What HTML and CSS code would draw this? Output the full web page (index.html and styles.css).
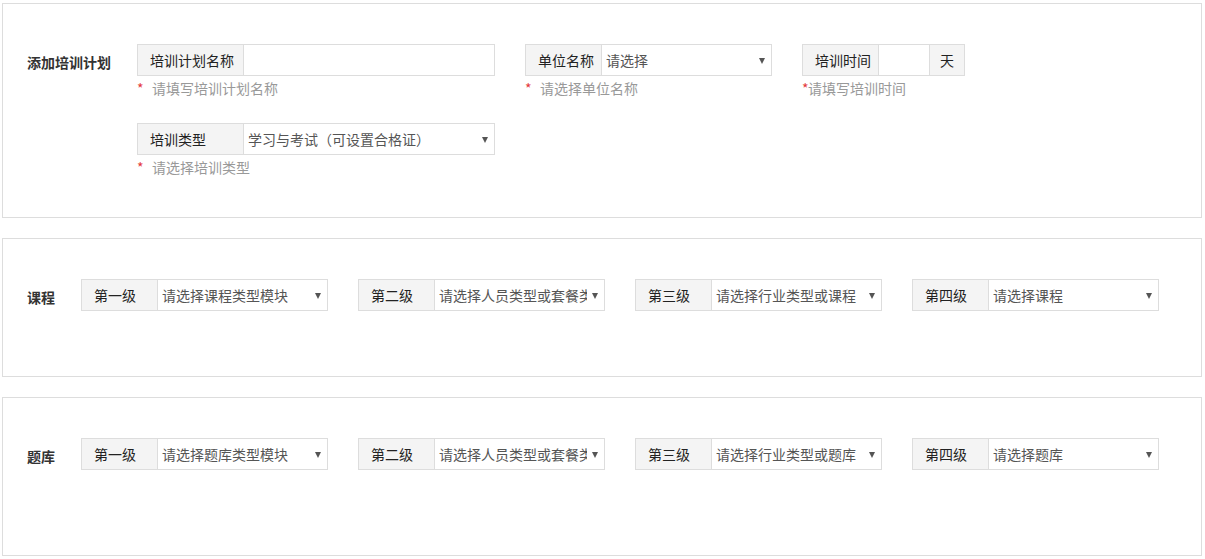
FILE: index.html
```html
<!DOCTYPE html>
<html lang="zh-CN">
<head>
<meta charset="UTF-8">
<meta name="viewport" content="width=device-width, initial-scale=1.0">
<title>添加培训计划</title>
<link rel="stylesheet" href="styles.css">
</head>
<body>

<div class="panel panel-plan">
    <div class="panel-label label-wide">添加培训计划</div>
    <div class="panel-body">
        <div class="form-row">
            <div class="field">
                <div class="input-group group-wide">
                    <span class="addon addon-wide">培训计划名称</span>
                    <input type="text" class="text-input" name="planName">
                </div>
                <div class="hint"><span class="star">*</span>请填写培训计划名称</div>
            </div>
            <div class="field">
                <div class="input-group">
                    <span class="addon">单位名称</span>
                    <div class="select-box"><span class="select-text">请选择</span><span class="caret"></span></div>
                </div>
                <div class="hint"><span class="star">*</span>请选择单位名称</div>
            </div>
            <div class="field">
                <div class="input-group group-days">
                    <span class="addon">培训时间</span>
                    <input type="text" class="text-input" name="days">
                    <span class="addon addon-end">天</span>
                </div>
                <div class="hint"><span class="star star-tight">*</span>请填写培训时间</div>
            </div>
        </div>
        <div class="form-row row-second">
            <div class="field">
                <div class="input-group group-wide">
                    <span class="addon addon-wide">培训类型</span>
                    <div class="select-box"><span class="select-text">学习与考试（可设置合格证）</span><span class="caret"></span></div>
                </div>
                <div class="hint"><span class="star">*</span>请选择培训类型</div>
            </div>
        </div>
    </div>
</div>

<div class="panel panel-course">
    <div class="panel-label">课程</div>
    <div class="panel-body">
        <div class="form-row">
            <div class="input-group">
                <span class="addon">第一级</span>
                <div class="select-box"><span class="select-text">请选择课程类型模块</span><span class="caret"></span></div>
            </div>
            <div class="input-group">
                <span class="addon">第二级</span>
                <div class="select-box"><span class="select-text">请选择人员类型或套餐类型</span><span class="caret"></span></div>
            </div>
            <div class="input-group">
                <span class="addon">第三级</span>
                <div class="select-box"><span class="select-text">请选择行业类型或课程</span><span class="caret"></span></div>
            </div>
            <div class="input-group">
                <span class="addon">第四级</span>
                <div class="select-box"><span class="select-text">请选择课程</span><span class="caret"></span></div>
            </div>
        </div>
    </div>
</div>

<div class="panel panel-bank">
    <div class="panel-label">题库</div>
    <div class="panel-body">
        <div class="form-row">
            <div class="input-group">
                <span class="addon">第一级</span>
                <div class="select-box"><span class="select-text">请选择题库类型模块</span><span class="caret"></span></div>
            </div>
            <div class="input-group">
                <span class="addon">第二级</span>
                <div class="select-box"><span class="select-text">请选择人员类型或套餐类型</span><span class="caret"></span></div>
            </div>
            <div class="input-group">
                <span class="addon">第三级</span>
                <div class="select-box"><span class="select-text">请选择行业类型或题库</span><span class="caret"></span></div>
            </div>
            <div class="input-group">
                <span class="addon">第四级</span>
                <div class="select-box"><span class="select-text">请选择题库</span><span class="caret"></span></div>
            </div>
        </div>
    </div>
</div>

</body>
</html>
```

FILE: styles.css
```css
* {
    box-sizing: border-box;
}
body {
    font-family: "Noto Sans CJK SC", "Liberation Sans", sans-serif;
    font-size: 14px;
    color: #333;
    background-color: #fff;
    margin: 0;
    padding: 3px 0 0 2px;
}
.panel {
    display: flex;
    align-items: flex-start;
    width: 1200px;
    border: 1px solid #ddd;
    padding: 40px 0 65px 24px;
    margin-bottom: 20px;
}
.panel-plan {
    padding-bottom: 40px;
}
.panel-bank {
    padding-bottom: 85px;
}
.panel-label {
    width: 54px;
    height: 32px;
    flex-shrink: 0;
    font-weight: bold;
    line-height: 32px;
    padding-top: 2px;
}
.label-wide {
    width: 110px;
}
.form-row {
    display: flex;
    gap: 30px;
}
.row-second {
    margin-top: 25px;
}
.input-group {
    display: flex;
    width: 247px;
    height: 32px;
    border: 1px solid #ddd;
    background-color: #fff;
}
.group-wide {
    width: 358px;
}
.group-days {
    width: 163px;
}
.addon {
    flex-shrink: 0;
    width: 76px;
    padding-left: 12px;
    line-height: 30px;
    background-color: #f4f4f4;
    border-right: 1px solid #ddd;
    color: #222;
    white-space: nowrap;
}
.addon-wide {
    width: 106px;
}
.addon-end {
    width: 35px;
    padding-left: 10px;
    border-right: none;
    border-left: 1px solid #ddd;
}
.text-input {
    flex: 1;
    min-width: 0;
    border: none;
    outline: none;
    padding: 0 4px;
    font: inherit;
}
.select-box {
    position: relative;
    flex: 1;
    min-width: 0;
    padding: 0 17px 0 4px;
    line-height: 30px;
    color: #555;
}
.select-text {
    display: block;
    white-space: nowrap;
    overflow: hidden;
}
.caret {
    position: absolute;
    right: 6px;
    top: 13px;
    width: 0;
    height: 0;
    border-left: 3px solid transparent;
    border-right: 3px solid transparent;
    border-top: 6px solid #555;
}
.hint {
    margin-top: 2px;
    height: 20px;
    line-height: 20px;
    color: #999;
}
.star {
    display: inline-block;
    vertical-align: top;
    width: 15px;
    color: #e4393c;
}
.star-tight {
    width: 6px;
}
```
